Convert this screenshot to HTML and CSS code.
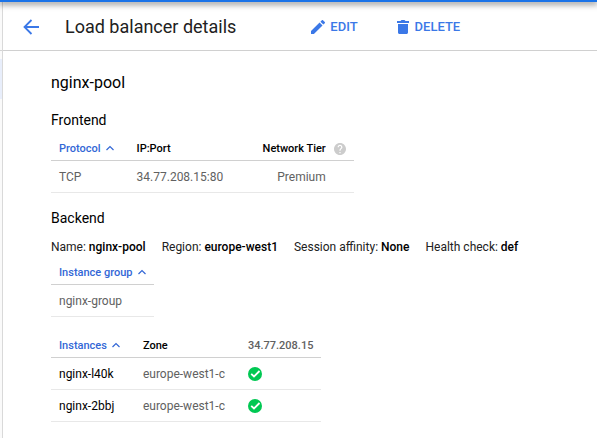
FILE: index.html
```html
<!DOCTYPE html>
<html lang="en">
<head>
<meta charset="utf-8">
<meta name="viewport" content="width=device-width, initial-scale=1">
<title>Load balancer details</title>
<link rel="stylesheet" href="styles.css">
</head>
<body>
<div class="topbar"></div>
<div class="shell">
  <nav class="rail" aria-label="Sections"><div class="rail-head"></div><div class="rail-current"></div></nav>
  <div class="page">
    <header class="toolbar">
      <a class="back" href="#" aria-label="Back"><svg viewBox="0 0 16 16" width="16" height="16"><path d="M16 8H1.500M8.500 1L1.500 8l7 7" fill="none" stroke="currentColor" stroke-width="1.800"/></svg></a>
      <h1 class="title">Load balancer details</h1>
      <div class="actions">
        <button class="action" type="button"><svg viewBox="3 3 18 18" width="14" height="14"><path fill="currentColor" d="M3 17.250V21h3.750L17.810 9.940l-3.750-3.750L3 17.250zM20.710 7.040a1 1 0 0 0 0-1.410l-2.340-2.340a1 1 0 0 0-1.410 0l-1.830 1.830 3.750 3.750 1.830-1.830z"/></svg>EDIT</button>
        <button class="action" type="button"><svg viewBox="0 0 14 14" width="14" height="14"><path fill="currentColor" d="M2 4h10v8.500c0 .8-.7 1.500-1.500 1.500h-7C2.700 14 2 13.300 2 12.500V4zM1 1h3.500l1-1h3l1 1H13v2H1z"/></svg>DELETE</button>
      </div>
    </header>
    <main class="content">
      <h2 class="name">nginx-pool</h2>
      <section>
        <h3 class="section-title">Frontend</h3>
        <table class="grid">
          <thead><tr>
            <th><button class="sort" type="button">Protocol<svg viewBox="0 0 8 6" width="8" height="6"><path d="M.5 5L4 1.500 7.500 5" fill="none" stroke="currentColor" stroke-width="1.200"/></svg></button></th>
            <th class="port">IP:Port</th>
            <th class="tier">Network Tier</th>
            <th class="help"><svg viewBox="2 2 20 20" width="12" height="12" role="img" aria-label="Help"><path fill="#ccc" d="M12 2C6.480 2 2 6.480 2 12s4.480 10 10 10 10-4.480 10-10S17.520 2 12 2zm1 17h-2v-2h2v2zm2.070-7.750l-.9.920C13.450 12.900 13 13.500 13 15h-2v-.5c0-1.100.45-2.100 1.170-2.830l1.240-1.260c.37-.36.59-.86.59-1.410 0-1.100-.9-2-2-2s-2 .9-2 2H8c0-2.210 1.790-4 4-4s4 1.790 4 4c0 .88-.36 1.680-.93 2.250z"/></svg></th>
          </tr></thead>
          <tbody><tr><td>TCP</td><td>34.77.208.15:80</td><td class="tier">Premium</td><td></td></tr></tbody>
        </table>
      </section>
      <section>
        <h3 class="section-title">Backend</h3>
        <div class="facts">
          <span>Name: <b>nginx-pool</b></span>
          <span>Region: <b>europe-west1</b></span>
          <span>Session affinity: <b>None</b></span>
          <span>Health check: <b>def</b></span>
        </div>
        <table class="grid">
          <thead><tr><th><button class="sort" type="button">Instance group<svg viewBox="0 0 8 6" width="8" height="6"><path d="M.5 5L4 1.500 7.500 5" fill="none" stroke="currentColor" stroke-width="1.200"/></svg></button></th></tr></thead>
          <tbody><tr><td>nginx-group</td></tr></tbody>
        </table>
        <table class="grid">
          <thead><tr>
            <th><button class="sort" type="button">Instances<svg viewBox="0 0 8 6" width="8" height="6"><path d="M.5 5L4 1.500 7.500 5" fill="none" stroke="currentColor" stroke-width="1.200"/></svg></button></th>
            <th>Zone</th>
            <th class="address">34.77.208.15</th>
          </tr></thead>
          <tbody>
            <tr><td class="instance">nginx-l40k</td><td>europe-west1-c</td><td><svg viewBox="0 0 14 14" width="14" height="14" role="img" aria-label="Healthy"><circle cx="7" cy="7" r="7" fill="#00c853"/><path d="M3.200 6.800l2.800 2.700 5.500-5.500" fill="none" stroke="#fff" stroke-width="1.800"/></svg></td></tr>
            <tr><td class="instance">nginx-2bbj</td><td>europe-west1-c</td><td><svg viewBox="0 0 14 14" width="14" height="14" role="img" aria-label="Healthy"><circle cx="7" cy="7" r="7" fill="#00c853"/><path d="M3.200 6.800l2.800 2.700 5.500-5.500" fill="none" stroke="#fff" stroke-width="1.800"/></svg></td></tr>
          </tbody>
        </table>
      </section>
    </main>
  </div>
</div>
</body>
</html>
```
FILE: styles.css
```css
* { box-sizing: border-box; }
body {
  margin: 0;
  min-height: 100vh;
  display: flex;
  flex-direction: column;
  background: #fff;
  color: #212121;
  font: 12px/16px Roboto, "Liberation Sans", sans-serif;
}
h1, h2, h3 { margin: 0; font-weight: 400; }
button { font: inherit; border: 0; padding: 0; background: none; cursor: pointer; }
svg { display: block; flex: none; }
b { font-weight: 500; color: #000; }

.topbar {
  position: relative;
  height: 2px;
  background: #1a73e8;
  box-shadow: 0 1px 6px 1px rgba(0, 0, 0, .55);
}
.shell { display: flex; flex: 1; }
.rail { width: 3px; border-right: 1px solid #d9d9d9; background: #fafafa; }
.rail-head { height: 49px; border-bottom: 1px solid #d4d4d4; }
.rail-current { height: 40px; margin-top: 8px; background: #e8eefb; }
.page { flex: 1; }

.toolbar {
  display: flex;
  align-items: center;
  height: 49px;
  padding: 1px 20px 0;
  border-bottom: 1px solid #d0d0d0;
}
.back { color: #3b78e7; }
.title { margin-left: 26px; font-size: 18px; line-height: 24px; }
.actions { display: flex; gap: 38px; margin-left: 75px; }
.action {
  display: flex;
  align-items: center;
  gap: 5px;
  color: #3b78e7;
  font-size: 13px;
  font-weight: 500;
}

.content { padding: 20px 48px 16px; }
.name { color: #000; font-size: 16px; line-height: 24px; }
.section-title { margin: 16px 0 8px; color: #000; font-size: 14px; line-height: 18px; }
.facts { display: flex; flex-wrap: wrap; gap: 16px; margin: 12px 0 6px; }

.grid { border-collapse: separate; border-spacing: 0; }
.grid + .grid { margin-top: 17px; }
.grid th, .grid td { padding: 0 8px; text-align: left; white-space: nowrap; }
.grid th + th, .grid td + td { padding-left: 15px; }
.grid th {
  height: 24px;
  border-bottom: 1px solid #d0d0d0;
  color: #000;
  font-size: 11px;
  font-weight: 500;
}
.grid td { height: 32px; border-bottom: 1px solid #e8e8e8; color: #616161; }
.sort { display: flex; align-items: center; gap: 5px; color: #3367d6; font-weight: 500; }
.sort svg { margin-bottom: 2px; }
.grid .port { min-width: 126px; }
.grid .tier { padding-right: 0; text-align: right; }
.grid th.help { padding-left: 8px; }
.grid .address { color: #616161; }
.grid .instance { color: #000; }
```
